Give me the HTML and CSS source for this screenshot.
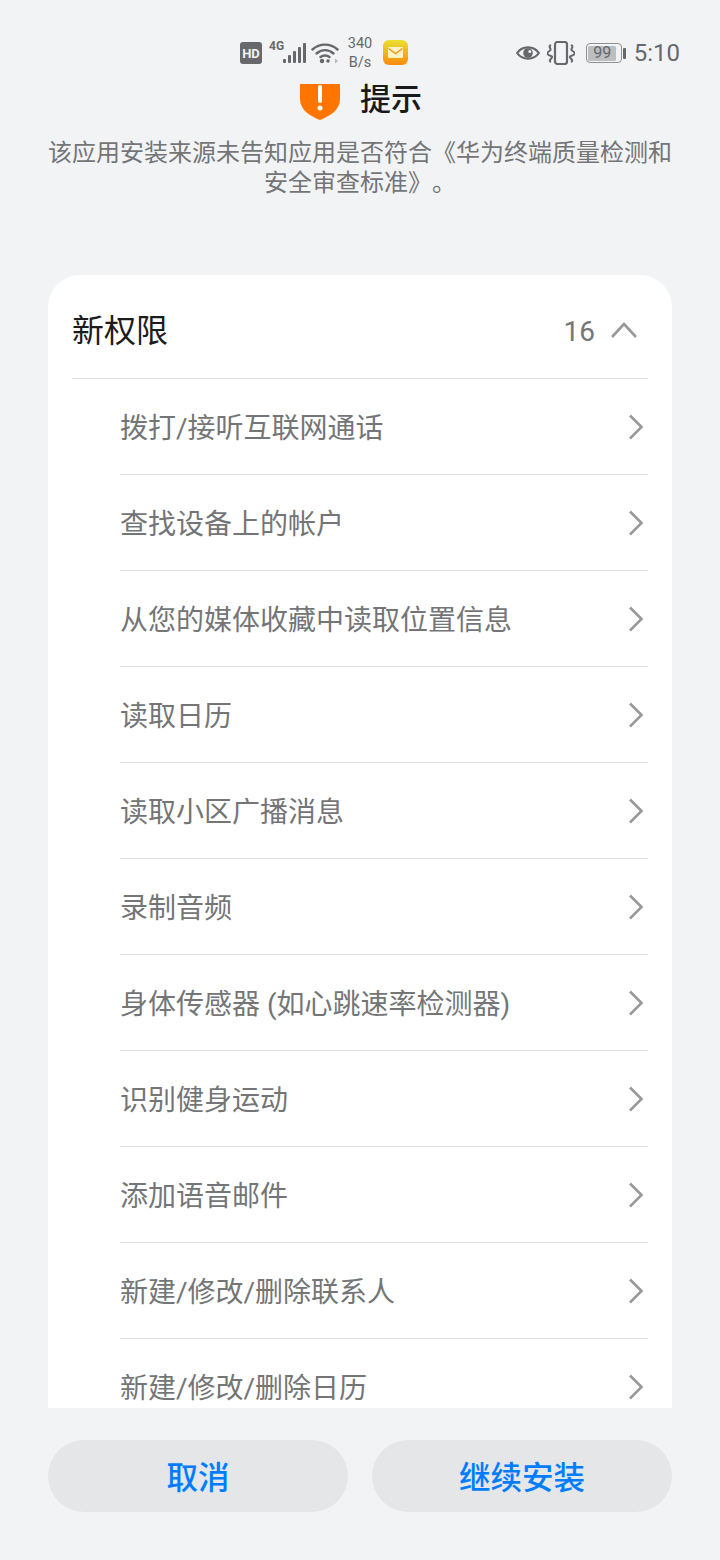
FILE: index.html
```html
<!DOCTYPE html>
<html lang="zh-CN">
<head>
<meta charset="utf-8">
<title>提示</title>
<link rel="stylesheet" href="styles.css">
</head>
<body>
<div class="screen">
  <div class="status">
    <svg class="ic-hd" viewBox="0 0 22 22"><rect width="22" height="22" rx="3" fill="#66686b"/><text x="11" y="16" text-anchor="middle" class="hd-t">HD</text></svg>
    <span class="net">4G</span>
    <svg class="ic-sig" viewBox="0 0 24 22"><g fill="#66686b"><rect x="0" y="17" width="3" height="4" rx="1"/><rect x="5" y="13" width="3" height="8" rx="1"/><rect x="10" y="9" width="3" height="12" rx="1"/><rect x="15" y="5" width="3" height="16" rx="1"/><rect x="20" y="1" width="3" height="20" rx="1"/></g></svg>
    <svg class="ic-wifi" viewBox="0 0 28 22"><g fill="none" stroke="#66686b" stroke-width="2.4" stroke-linecap="round"><path d="M1.5 7.5C8.500 1 19.500 1 26.500 7.500"/><path d="M5.500 11.500C10.500 7 17.500 7 22.500 11.500"/><path d="M9.500 15C12 13 16 13 18.500 15"/></g><circle cx="11" cy="19" r="2.200" fill="#66686b"/><circle cx="17" cy="19" r="1.800" fill="#66686b"/><path d="M24 16.500l3 2.500-3 2.500z" fill="#b4b6b8"/></svg>
    <div class="speed"><span>340</span><span>B/s</span></div>
    <svg class="ic-mail" viewBox="0 0 25 25"><defs><linearGradient id="mg" x1="0" y1="0" x2="0" y2="1"><stop offset="0" stop-color="#e9e02e"/><stop offset="1" stop-color="#fb8a0c"/></linearGradient></defs><rect width="25" height="25" rx="6" fill="url(#mg)"/><path d="M6 7h13a1 1 0 0 1 1 1v9a1 1 0 0 1-1 1H6a1 1 0 0 1-1-1V8a1 1 0 0 1 1-1z" fill="#fff2c4"/><path d="M5.500 8.500l7 5 7-5" fill="none" stroke="#f59a16" stroke-width="1.500"/></svg>
    <div class="status-right">
      <svg class="ic-eye" viewBox="0 0 24 18"><path d="M1.200 9C6 1.500 18 1.500 22.800 9 18 16.500 6 16.500 1.200 9z" fill="none" stroke="#66686b" stroke-width="2.200"/><circle cx="12" cy="9" r="4.800" fill="#66686b"/><circle cx="13.800" cy="7.400" r="1.500" fill="#f1f3f5"/></svg>
      <svg class="ic-vib" viewBox="0 0 28 24"><rect x="8" y="1" width="12" height="22" rx="2.500" fill="none" stroke="#66686b" stroke-width="2.200"/><g fill="none" stroke="#66686b" stroke-width="2"><path d="M4 4C0 6 6 8 2.500 10S0 14 4 15 0 19 4 21"/><path d="M24 4c4 2-2 4 1.500 6s2.500 4-1.500 5 4 4 0 6"/></g></svg>
      <div class="battery"><div class="bat-body"><span class="bat-fill">99</span></div><span class="bat-tip"></span></div>
      <span class="time">5:10</span>
    </div>
  </div>

  <div class="title-row">
    <svg class="shield" viewBox="0 0 40 36"><path d="M0 0H40V15C40 26 30 32 20 36 10 32 0 26 0 15z" fill="#ff7500"/><rect x="18" y="1" width="4" height="18" rx="2" fill="#fff"/><circle cx="20" cy="24" r="2.500" fill="#fff"/></svg>
    <h1 class="title">提示</h1>
  </div>
  <p class="desc">该应用安装来源未告知应用是否符合《华为终端质量检测和<br>安全审查标准》。</p>

  <section class="card">
    <div class="card-head">
      <span class="card-title">新权限</span>
      <span class="count">16</span>
      <svg class="chev-up" viewBox="0 0 28 18"><path d="M2 16L14 3 26 16" fill="none" stroke="#97999b" stroke-width="2.600"/></svg>
    </div>
    <ul class="list">
      <li class="row"><span class="row-text">拨打/接听互联网通话</span><svg class="chev" viewBox="0 0 16 28"><path d="M2 2.500l11.500 11.500L2 25.500" /></svg></li>
      <li class="row"><span class="row-text">查找设备上的帐户</span><svg class="chev" viewBox="0 0 16 28"><path d="M2 2.500l11.500 11.500L2 25.500" /></svg></li>
      <li class="row"><span class="row-text">从您的媒体收藏中读取位置信息</span><svg class="chev" viewBox="0 0 16 28"><path d="M2 2.500l11.500 11.500L2 25.500" /></svg></li>
      <li class="row"><span class="row-text">读取日历</span><svg class="chev" viewBox="0 0 16 28"><path d="M2 2.500l11.500 11.500L2 25.500" /></svg></li>
      <li class="row"><span class="row-text">读取小区广播消息</span><svg class="chev" viewBox="0 0 16 28"><path d="M2 2.500l11.500 11.500L2 25.500" /></svg></li>
      <li class="row"><span class="row-text">录制音频</span><svg class="chev" viewBox="0 0 16 28"><path d="M2 2.500l11.500 11.500L2 25.500" /></svg></li>
      <li class="row"><span class="row-text">身体传感器 (如心跳速率检测器)</span><svg class="chev" viewBox="0 0 16 28"><path d="M2 2.500l11.500 11.500L2 25.500" /></svg></li>
      <li class="row"><span class="row-text">识别健身运动</span><svg class="chev" viewBox="0 0 16 28"><path d="M2 2.500l11.500 11.500L2 25.500" /></svg></li>
      <li class="row"><span class="row-text">添加语音邮件</span><svg class="chev" viewBox="0 0 16 28"><path d="M2 2.500l11.500 11.500L2 25.500" /></svg></li>
      <li class="row"><span class="row-text">新建/修改/删除联系人</span><svg class="chev" viewBox="0 0 16 28"><path d="M2 2.500l11.500 11.500L2 25.500" /></svg></li>
      <li class="row"><span class="row-text">新建/修改/删除日历</span><svg class="chev" viewBox="0 0 16 28"><path d="M2 2.500l11.500 11.500L2 25.500" /></svg></li>
    </ul>
  </section>

  <div class="actions">
    <button class="btn">取消</button>
    <button class="btn">继续安装</button>
  </div>
</div>
</body>
</html>
```
FILE: styles.css
```css
* { box-sizing: border-box; }
html, body { margin: 0; padding: 0; }
body {
  background: #f1f3f5;
  font-family: Roboto, "Noto Sans CJK SC", sans-serif;
  text-spacing-trim: space-all;
}
.screen {
  width: 720px;
  height: 1560px;
  overflow: hidden;
  display: flex;
  flex-direction: column;
}
.status {
  height: 84px;
  flex: none;
  padding: 34px 40px 0 240px;
  display: flex;
  align-items: flex-start;
  color: #66686b;
}
.ic-hd { width: 22px; height: 22px; margin-top: 8px; }
.hd-t { font: 700 13px Roboto, sans-serif; fill: #f1f3f5; }
.net { font: 700 12px/12px Roboto, sans-serif; width: 14px; margin: 6px 0 0 7px; }
.ic-sig { width: 24px; height: 22px; margin: 8px 0 0 0; }
.ic-wifi { width: 28px; height: 22px; margin: 8px 0 0 4px; }
.speed {
  display: flex;
  flex-direction: column;
  align-items: center;
  font-size: 14.500px;
  line-height: 19px;
  margin: 0 0 0 8px;
  width: 26px;
}
.ic-mail { width: 25px; height: 25px; margin: 6px 0 0 10px; }
.status-right { margin-left: auto; display: flex; align-items: center; height: 38px; }
.ic-eye { width: 24px; height: 18px; }
.ic-vib { width: 28px; height: 24px; margin-left: 7px; }
.battery { display: flex; align-items: center; margin-left: 11px; }
.bat-body {
  width: 36px; height: 20px;
  border: 1.500px solid #8f9193;
  border-radius: 4px;
  padding: 1.500px;
}
.bat-fill {
  display: block;
  height: 100%;
  width: 28px;
  background: #bcbec0;
  border-radius: 1.500px;
  font-size: 16px;
  line-height: 14px;
  text-align: center;
  color: #66686b;
}
.bat-tip { width: 3px; height: 11px; margin-left: 1px; background: #66686b; border-radius: 1px; }
.time { font-size: 24px; line-height: 40px; margin-left: 8px; color: #66686b; }

.title-row {
  height: 36px;
  flex: none;
  display: flex;
  align-items: flex-start;
  padding-left: 300px;
}
.shield { width: 40px; height: 36px; flex: none; }
.title {
  margin: 1px 0 0 20px;
  font-size: 31px;
  line-height: 30px;
  font-weight: 500;
  color: #1a1a1a;
}
.desc {
  margin: 18px 0 0;
  padding: 0 48px;
  height: 137px;
  flex: none;
  font-size: 24px;
  line-height: 30px;
  color: #737577;
  text-align: center;
}
.card {
  flex: none;
  height: 1133px;
  margin: 0 48px;
  padding: 0 24px;
  background: #fff;
  border-radius: 32px 32px 0 0;
  overflow: hidden;
}
.card-head {
  height: 104px;
  display: flex;
  align-items: center;
  border-bottom: 1px solid #dcdddf;
}
.card-title { font-size: 32px; color: #1c1c1c; flex: 1; padding-top: 3px; }
.count { font-size: 28px; color: #737577; padding-top: 9px; }
.chev-up { width: 28px; height: 18px; margin: 6px 10px 0 15px; }
.list { list-style: none; margin: 0; padding: 0 0 0 48px; }
.row {
  height: 96px;
  display: flex;
  align-items: center;
  justify-content: space-between;
  border-bottom: 1px solid #dcdddf;
  font-size: 28px;
  color: #737577;
  padding-right: 4px;
}
.row-text { position: relative; top: -1px; }
.chev { width: 16px; height: 28px; flex: none; }
.chev path { fill: none; stroke: #97999b; stroke-width: 2.600; }
.actions {
  flex: none;
  display: flex;
  gap: 24px;
  padding: 32px 48px 0;
}
.btn {
  flex: 1;
  height: 72px;
  border: 0;
  border-radius: 36px;
  background: #e4e6e8;
  color: #007dff;
  font: 500 31.500px/70px "Noto Sans CJK SC", sans-serif;
  padding: 0 0 2px;
}
```
